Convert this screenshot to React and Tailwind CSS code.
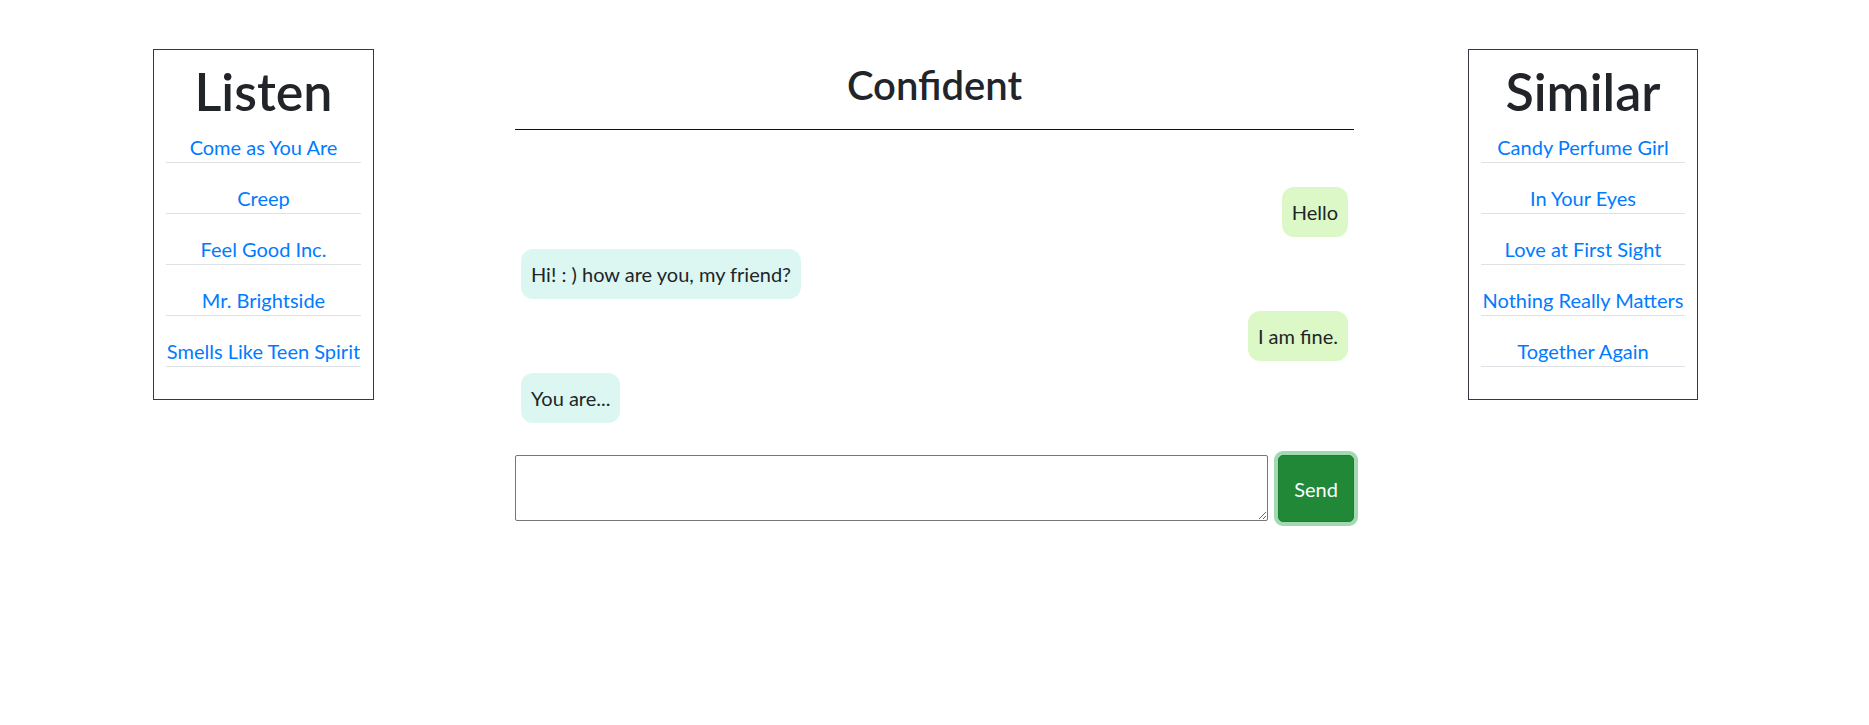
import { useState } from "react";

const listen = [
    "Come as You Are",
    "Creep",
    "Feel Good Inc.",
    "Mr. Brightside",
    "Smells Like Teen Spirit",
];

const similar = [
    "Candy Perfume Girl",
    "In Your Eyes",
    "Love at First Sight",
    "Nothing Really Matters",
    "Together Again",
];

const messages = [
    { text: "Hello", mine: true },
    { text: "Hi! : ) how are you, my friend?", mine: false },
    { text: "I am fine.", mine: true },
    { text: "You are...", mine: false },
];

function SongBox({ title, songs, width }) {
    return (
        <div className={`${width} border border-[#343a40] px-[12px] pt-[9px] pb-[12px] text-center`}>
            <h2 className="text-[52px] leading-[64px] font-semibold text-[#212529] mb-[9px]">
                {title}
            </h2>
            <ul className="flex flex-col gap-[20px] pb-[20px]">
                {songs.map((s) => (
                    <li key={s} className="border-b border-[#dee2e6]">
                        <a href="#" className="block text-[20px] leading-[30px] text-[#007bff] whitespace-nowrap">
                            {s}
                        </a>
                    </li>
                ))}
            </ul>
        </div>
    );
}

export default function App() {
    const [draft, setDraft] = useState("");

    return (
        <div className="min-h-screen bg-white font-['Lato','Open_Sans',sans-serif] text-[#212529]">
            <div className="flex items-start pt-[49px]">
                {/* Listen */}
                <div className="w-[515px] shrink-0 pl-[153px]">
                    <SongBox title="Listen" songs={listen} width="w-[221px]" />
                </div>

                {/* Chat */}
                <div className="w-[839px] shrink-0">
                    <div className="pt-[12px] pb-[20px] border-b border-[#051805]">
                        <h1 className="text-[40px] leading-[48px] font-semibold text-center">Confident</h1>
                    </div>

                    <div className="flex flex-col gap-[12px] px-[6px] pt-[57px]">
                        {messages.map((m, i) => (
                            <div key={i} className={`flex ${m.mine ? "justify-end" : "justify-start"}`}>
                                <div
                                    className={`rounded-[12px] px-[10px] py-[11px] text-[20px] leading-[28px] ${m.mine ? "bg-[#dcf8c6]" : "bg-[#dcf7f2]"}`}
                                >
                                    {m.text}
                                </div>
                            </div>
                        ))}
                    </div>

                    <div className="flex items-start gap-[10px] pt-[32px]">
                        <textarea
                            value={draft}
                            onChange={(e) => setDraft(e.target.value)}
                            className="flex-1 h-[66px] border border-[#767676] rounded-[2px] px-2 py-1 text-[16px] outline-none"
                        />
                        <button className="w-[76px] h-[67px] shrink-0 rounded-[5px] border border-[#1e7e34] bg-[#218838] text-white text-[20px] shadow-[0_0_0_4px_rgba(72,180,97,0.5)]">
                            Send
                        </button>
                    </div>
                </div>

                {/* Similar */}
                <div className="pl-[114px]">
                    <SongBox title="Similar" songs={similar} width="w-[230px]" />
                </div>
            </div>
        </div>
    );
}
